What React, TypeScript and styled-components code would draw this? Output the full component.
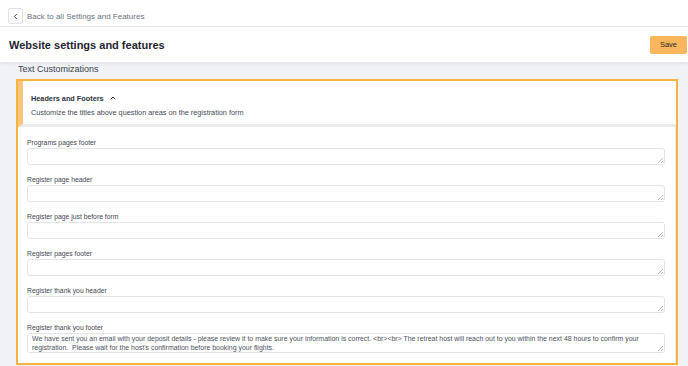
import styled, { createGlobalStyle } from 'styled-components';
import { ChevronLeft, ChevronUp } from 'lucide-react';

const GlobalStyle = createGlobalStyle`
  html, body {
    margin: 0;
    padding: 0;
    background: #f1f2f5;
    font-family: "Liberation Sans", Arial, sans-serif;
    overflow: hidden;
  }
  * { box-sizing: border-box; }
`;

const Page = styled.div`
  width: 688px;
  height: 366px;
  display: flex;
  flex-direction: column;
  overflow: hidden;
`;

const TopBar = styled.div`
  height: 27px;
  background: #ffffff;
  border-bottom: 1px solid #e6e8eb;
  display: flex;
  align-items: center;
  padding: 6px 0 0 8px;
  flex-shrink: 0;
`;

const BackButton = styled.button`
  width: 15px;
  height: 16px;
  padding: 0;
  border: 1px solid #dfe2e6;
  border-radius: 2px;
  background: #fff;
  display: flex;
  align-items: center;
  justify-content: center;
  color: #374151;
`;

const BackText = styled.span`
  margin-left: 4px;
  font-size: 8px;
  color: #6b7280;
`;

const Header = styled.header`
  height: 35px;
  background: #ffffff;
  display: flex;
  align-items: center;
  justify-content: space-between;
  padding: 0 1px 0 9px;
  box-shadow: 0 2px 3px rgba(0, 0, 0, 0.06);
  flex-shrink: 0;
  position: relative;
  z-index: 1;
`;

const Title = styled.h1`
  margin: 0;
  font-size: 11px;
  font-weight: 700;
  color: #1f2430;
`;

const SaveButton = styled.button`
  width: 37px;
  height: 18px;
  border: none;
  border-radius: 2px;
  background: #f9b65d;
  color: #2b2b2b;
  font-family: inherit;
  font-size: 7.5px;
  padding: 0;
`;

const Content = styled.main`
  flex: 1;
  padding: 1px 10px 1px 16px;
  display: flex;
  flex-direction: column;
`;

const SectionTitle = styled.h2`
  margin: 0 0 0 2px;
  height: 16px;
  font-size: 9px;
  font-weight: 400;
  color: #3b4250;
  line-height: 12px;
`;

const Card = styled.section`
  border: 2px solid #f5b340;
  background: #ffffff;
  flex: 1;
  display: flex;
  flex-direction: column;
`;

const CardHead = styled.div`
  height: 46px;
  border-left: 5px solid #f9c57a;
  padding: 12px 0 0 8px;
  border-bottom: 3px solid #e9ebee;
`;

const HeadTitle = styled.div`
  display: flex;
  align-items: center;
  gap: 5px;
  font-size: 7.3px;
  font-weight: 700;
  color: #2d3340;
  height: 10px;
`;

const HeadDesc = styled.div`
  margin-top: 5px;
  font-size: 7.3px;
  color: #434a57;
`;

const Fields = styled.div`
  padding: 11px 10px 0 9px;
  display: flex;
  flex-direction: column;
  border-right: 1px solid #e4e6ea;
  flex: 1;
`;

const Field = styled.div`
  display: flex;
  flex-direction: column;
  margin-bottom: 10px;
`;

const Label = styled.label`
  font-size: 6.8px;
  color: #3f4653;
  height: 10px;
  line-height: 9px;
`;

const Area = styled.textarea<{ $tall?: boolean }>`
  height: ${(p) => (p.$tall ? '20px' : '17px')};
  border: 1px solid #e2e4e8;
  border-radius: 3px;
  padding: ${(p) => (p.$tall ? '1px 4px 8px 4px' : '1px 4px 0 4px')};
  font-family: inherit;
  font-size: 6.95px;
  line-height: 8.5px;
  color: #4a5160;
  background: #fff;
  resize: vertical;
  outline: none;
  overflow-y: ${(p) => (p.$tall ? 'scroll' : 'hidden')};

  &::-webkit-scrollbar {
    width: 5px;
    height: 5px;
  }
  &::-webkit-scrollbar-track {
    background: #f3f4f6;
  }
  &::-webkit-scrollbar-thumb {
    background: #b9bcc2;
    border-radius: 3px;
  }
  &::-webkit-resizer {
    background: linear-gradient(
        135deg,
        transparent 45%,
        #b5b8be 45%,
        #b5b8be 58%,
        transparent 58%,
        transparent 75%,
        #b5b8be 75%,
        #b5b8be 88%,
        transparent 88%
      )
      no-repeat right 1px bottom 1px / 5px 5px;
  }
`;

const fields = [
  'Programs pages footer',
  'Register page header',
  'Register page just before form',
  'Register pages footer',
  'Register thank you header',
];

const footerText =
  "We have sent you an email with your deposit details - please review it to make sure your information is correct. <br><br> The retreat host will reach out to you within the next 48 hours to confirm your registration.  Please wait for the host's confirmation before booking your flights.";

function App() {
  return (
    <Page>
      <GlobalStyle />
      <TopBar>
        <BackButton>
          <ChevronLeft size={9} strokeWidth={2.5} />
        </BackButton>
        <BackText>Back to all Settings and Features</BackText>
      </TopBar>
      <Header>
        <Title>Website settings and features</Title>
        <SaveButton>Save</SaveButton>
      </Header>
      <Content>
        <SectionTitle>Text Customizations</SectionTitle>
        <Card>
          <CardHead>
            <HeadTitle>
              Headers and Footers
              <ChevronUp size={8} strokeWidth={3} />
            </HeadTitle>
            <HeadDesc>Customize the titles above question areas on the registration form</HeadDesc>
          </CardHead>
          <Fields>
            {fields.map((f) => (
              <Field key={f}>
                <Label>{f}</Label>
                <Area />
              </Field>
            ))}
            <Field>
              <Label>Register thank you footer</Label>
              <Area $tall defaultValue={footerText} />
            </Field>
          </Fields>
        </Card>
      </Content>
    </Page>
  );
}

export default App;
